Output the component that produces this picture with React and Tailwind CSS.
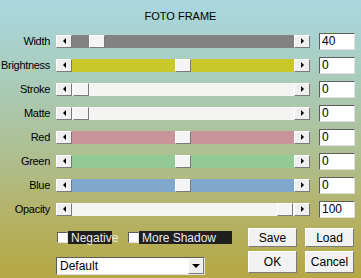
import React from "react";

const rows = [
  { label: "Width", value: "40", track: "bg-[#828282]", thumb: "ml-[17px]" },
  { label: "Brightness", value: "0", track: "bg-[#cac72c]", thumb: "ml-[103px]" },
  { label: "Stroke", value: "0", track: "bg-[#f4f4f2]", thumb: "ml-[1px]" },
  { label: "Matte", value: "0", track: "bg-[#f4f4f2]", thumb: "ml-[1px]" },
  { label: "Red", value: "0", track: "bg-[#c9939a]", thumb: "ml-[103px]" },
  { label: "Green", value: "0", track: "bg-[#93c994]", thumb: "ml-[103px]" },
  { label: "Blue", value: "0", track: "bg-[#80a8cc]", thumb: "ml-[103px]" },
  { label: "Opacity", value: "100", track: "bg-[#f4f4f2]", thumb: "ml-[205px]" },
];

const raised =
  "border border-t-white border-l-white border-b-[#7a7a7a] border-r-[#7a7a7a]";
const sunken =
  "border border-t-[#5e5e5e] border-l-[#5e5e5e] border-b-[#e0e0e0] border-r-[#e0e0e0]";

const ArrowBtn = ({ dir }) => (
  <div className={`w-[16px] h-full bg-[#efefef] flex items-center justify-center shrink-0 ${raised}`}>
    {dir === "left" ? (
      <div className="w-0 h-0 border-y-[3px] border-y-transparent border-r-[3px] border-r-black" />
    ) : (
      <div className="w-0 h-0 border-y-[3px] border-y-transparent border-l-[3px] border-l-black" />
    )}
  </div>
);

const SliderRow = ({ row }) => (
  <div className="h-[24px] flex items-center">
    <div className="w-[50px] text-right text-[11px] tracking-[-0.3px] text-black leading-none">
      {row.label}
    </div>
    <div className="ml-[6px] w-[254px] h-[13px] flex">
      <ArrowBtn dir="left" />
      <div className={`flex-1 h-full flex ${row.track}`}>
        <div className={`w-[16px] h-full bg-[#f4f4f4] ${raised} ${row.thumb}`} />
      </div>
      <ArrowBtn dir="right" />
    </div>
    <div className={`ml-[9px] w-[36px] h-[17px] bg-white ${sunken} flex items-center pl-[2px] text-[12px] leading-none text-black`}>
      {row.value}
    </div>
  </div>
);

const Button = ({ children, h }) => (
  <div className={`w-[49px] ${h} bg-[#f2f2f2] ${raised} flex items-center justify-center text-[12px] text-black leading-none`}>
    {children}
  </div>
);

const Check = ({ label, w }) => (
  <div className="flex items-center">
    <div className={`w-[11px] h-[11px] bg-white ${sunken}`} />
    <div className={`h-[13px] ${w} bg-[#1f1f1f] text-[#ececec] text-[12px] leading-none flex items-center pl-[3px]`}>
      {label}
    </div>
  </div>
);

export default function App() {
  return (
    <div
      className="w-[361px] h-[278px] overflow-hidden bg-[linear-gradient(180deg,#a9d7e1_0%,#a9cbb8_30%,#aebf92_55%,#b4b266_78%,#b6a744_100%)]"
      style={{ fontFamily: '"Liberation Sans", Arial, sans-serif' }}
    >
      <div className="pt-[9px] h-[23px] text-center text-[11px] leading-[14px] text-black">
        FOTO FRAME
      </div>
      <div className="mt-[6px] flex flex-col">
        {rows.map((r) => (
          <SliderRow key={r.label} row={r} />
        ))}
      </div>
      <div className="mt-[7px] flex h-[19px]">
        <div className="w-[248px] pl-[57px] flex items-center gap-[5px]">
          <Check label="Negative" w="w-[44px]" />
          <div className="ml-[11px]">
            <Check label="More Shadow" w="w-[93px]" />
          </div>
        </div>
        <Button h="h-[19px]">Save</Button>
        <div className="ml-[8px]">
          <Button h="h-[19px]">Load</Button>
        </div>
      </div>
      <div className="mt-[4px] flex h-[22px]">
        <div className="w-[248px] pl-[56px]">
          <div className={`mt-[6px] w-[149px] h-[18px] bg-white ${sunken} flex items-center`}>
            <div className="flex-1 pl-[3px] text-[12px] leading-none text-black">Default</div>
            <div className={`w-[16px] h-full bg-[#efefef] ${raised} flex items-center justify-center`}>
              <div className="w-0 h-0 border-x-[4px] border-x-transparent border-t-[4px] border-t-black" />
            </div>
          </div>
        </div>
        <Button h="h-[22px]">OK</Button>
        <div className="ml-[8px]">
          <Button h="h-[22px]">Cancel</Button>
        </div>
      </div>
    </div>
  );
}
